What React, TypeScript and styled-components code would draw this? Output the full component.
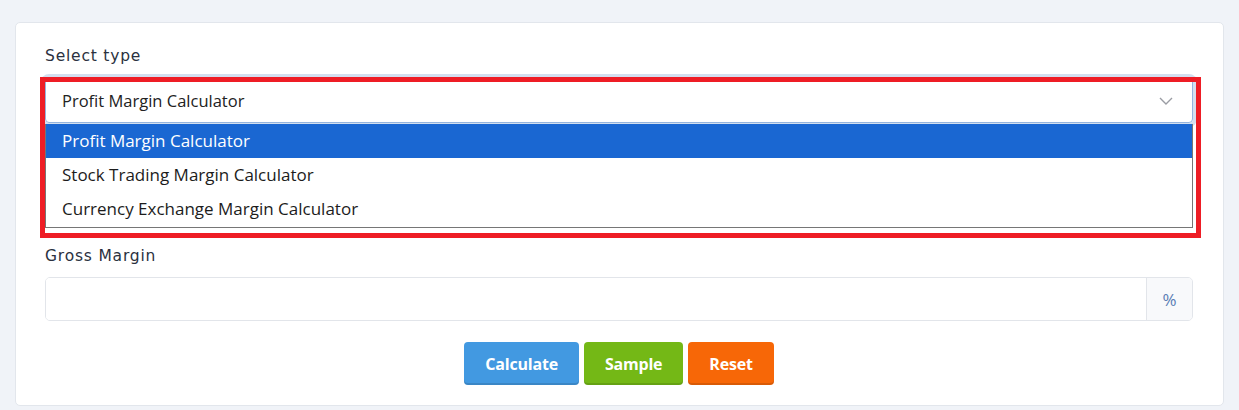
import * as React from 'react';
import styled, { createGlobalStyle } from 'styled-components';

const GlobalStyle = createGlobalStyle`
  body {
    margin: 0;
    background: #f0f3f8;
    font-family: "Open Sans", "Liberation Sans", sans-serif;
  }
`;

const Page = styled.div`
  padding: 22px 15px 4px 15px;
`;

const Card = styled.div`
  background: #fff;
  border: 1px solid #e2e6ec;
  border-radius: 5px;
  padding: 21px 30px 20px 29px;
`;

const Field = styled.div`
  margin-bottom: ${({ $gap }: { $gap?: number }) => $gap || 0}px;
`;

const Label = styled.div`
  font-family: "DejaVu Sans", sans-serif;
  font-size: 15.5px;
  letter-spacing: 0.8px;
  line-height: 24px;
  color: #2b3140;
  margin-bottom: ${({ $space }: { $space?: number }) => $space ?? 10}px;
`;

const SelectWrap = styled.div`
  position: relative;
`;

const SelectBox = styled.div`
  height: 45px;
  box-sizing: border-box;
  border: 1px solid #94b4de;
  border-radius: 4px;
  box-shadow: 0 0 0 4px #d3dfef;
  display: flex;
  align-items: center;
  justify-content: space-between;
  padding: 0 19px 0 16px;
  font-size: 16.5px;
  color: #222;
`;

const Chevron = styled.svg`
  width: 14px;
  height: 8px;
`;

const DropList = styled.ul`
  position: absolute;
  top: 46px;
  left: 0;
  right: 0;
  margin: 0;
  padding: 0 0 1px;
  list-style: none;
  background: #fff;
  border: 1px solid #767676;
  border-top: none;
  z-index: 2;
`;

const Option = styled.li`
  height: 34px;
  line-height: 34px;
  padding-left: 16px;
  font-size: 17px;
  color: ${({ $active }: { $active?: boolean }) => ($active ? '#fff' : '#1c1c1c')};
  background: ${({ $active }: { $active?: boolean }) => ($active ? '#1a67d2' : '#fff')};
`;

const Highlight = styled.div`
  position: absolute;
  top: -1px;
  left: -5px;
  right: -8px;
  height: 161px;
  box-sizing: border-box;
  border: 5px solid #ee1d25;
  pointer-events: none;
  z-index: 3;
`;

const InputGroup = styled.div`
  display: flex;
  height: 44px;
  border: 1px solid #e2e5ea;
  border-radius: 5px;
  box-sizing: border-box;
  overflow: hidden;
`;

const Input = styled.input`
  flex: 1;
  border: none;
  outline: none;
  font-size: 16px;
  padding: 0 14px;
`;

const Addon = styled.span`
  width: 45px;
  display: flex;
  align-items: center;
  justify-content: center;
  background: #f8f9fb;
  border-left: 1px solid #e2e5ea;
  color: #5a7db4;
  font-size: 17px;
`;

const Buttons = styled.div`
  display: flex;
  justify-content: center;
  gap: 5px;
  margin-top: 21px;
`;

const Button = styled.button`
  height: 43px;
  padding: 0 21px;
  border: none;
  border-radius: 4px;
  background: ${({ $color }: { $color: string }) => $color};
  box-shadow: inset 0 -2px 0 rgba(0, 0, 0, 0.12);
  color: #fff;
  font-family: "Open Sans", sans-serif;
  font-weight: 700;
  font-size: 16px;
  letter-spacing: -0.2px;
`;

const options = [
  'Profit Margin Calculator',
  'Stock Trading Margin Calculator',
  'Currency Exchange Margin Calculator',
];

const App: React.FC = () => (
  <Page>
    <GlobalStyle />
    <Card>
      <Field $gap={121}>
        <Label>Select type</Label>
        <SelectWrap>
          <SelectBox>
            Profit Margin Calculator
            <Chevron viewBox="0 0 14 8">
              <polyline points="1,1 7,7 13,1" fill="none" stroke="#9a9ca3" strokeWidth="1.4" />
            </Chevron>
          </SelectBox>
          <DropList>
            {options.map((item, i) => (
              <Option key={item} $active={i === 0}>
                {item}
              </Option>
            ))}
          </DropList>
          <Highlight />
        </SelectWrap>
      </Field>
      <Field>
        <Label $space={9}>Gross Margin</Label>
        <InputGroup>
          <Input />
          <Addon>%</Addon>
        </InputGroup>
      </Field>
      <Buttons>
        <Button $color="#4299e1">Calculate</Button>
        <Button $color="#74b816">Sample</Button>
        <Button $color="#f76707">Reset</Button>
      </Buttons>
    </Card>
  </Page>
);

export default App;
